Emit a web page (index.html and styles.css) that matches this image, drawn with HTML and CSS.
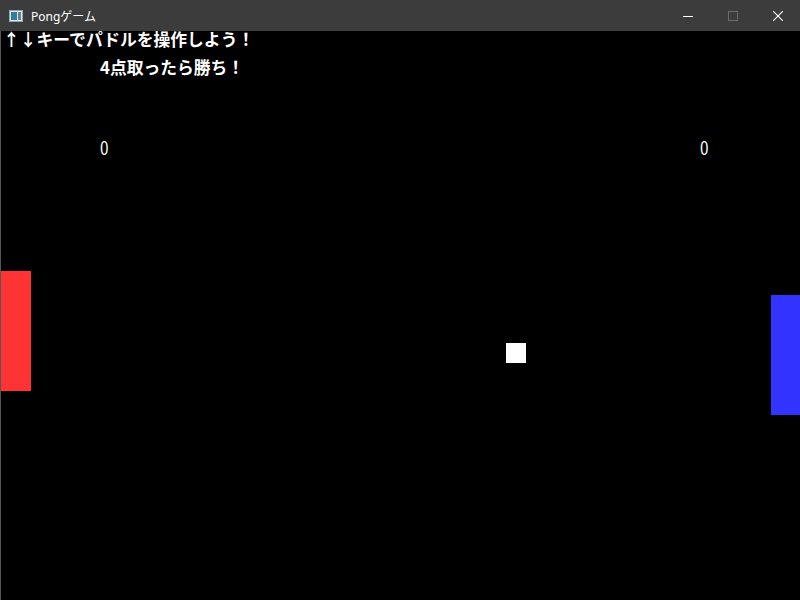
FILE: index.html
```html
<!DOCTYPE html>
<html lang="ja">
<head>
    <meta charset="UTF-8">
    <title>Pongゲーム</title>
    <link rel="stylesheet" href="styles.css">
</head>
<body>
    <!-- Window title bar -->
    <div class="titlebar">
        <div class="title">
            <svg class="app-icon" width="14" height="12" viewBox="0 0 14 12">
                <rect x="0.5" y="0.5" width="13" height="11" fill="#dfe6ea" stroke="#9aa6ad"/>
                <rect x="2" y="2" width="6" height="8" fill="#2f7f9a"/>
                <rect x="9" y="2" width="3" height="8" fill="#6b7f88"/>
            </svg>
            <span>Pongゲーム</span>
        </div>
        <div class="controls">
            <button class="ctrl">
                <svg width="10" height="10" viewBox="0 0 10 10"><line x1="0" y1="5.5" x2="10" y2="5.5" stroke="#fff" stroke-width="1"/></svg>
            </button>
            <button class="ctrl">
                <svg width="10" height="10" viewBox="0 0 10 10"><rect x="0.5" y="0.5" width="9" height="9" fill="none" stroke="#6a6a6a" stroke-width="1"/></svg>
            </button>
            <button class="ctrl">
                <svg width="10" height="10" viewBox="0 0 10 10"><path d="M0 0L10 10M10 0L0 10" stroke="#fff" stroke-width="1.1"/></svg>
            </button>
        </div>
    </div>

    <!-- Game area -->
    <div class="game">
        <div class="help">↑↓キーでパドルを操作しよう！</div>
        <div class="goal">4点取ったら勝ち！</div>
        <div class="score score-left">0</div>
        <div class="score score-right">0</div>
        <div class="paddle paddle-left"></div>
        <div class="paddle paddle-right"></div>
        <div class="ball"></div>
    </div>
</body>
</html>
```

FILE: styles.css
```css
/* General body styling */
body {
    margin: 0;
    width: 800px;
    height: 600px;
    overflow: hidden;
    background-color: #000;
    font-family: "Noto Sans CJK JP", "Noto Sans", sans-serif;
}

/* Title bar */
.titlebar {
    height: 31px;
    background-color: #3c3c3c;
    display: flex;
    justify-content: space-between;
    align-items: center;
}

.title {
    display: flex;
    align-items: center;
    padding-left: 9px;
    gap: 8px;
    color: #fff;
    font-size: 12px;
    font-family: "Noto Sans", "Noto Sans CJK JP", sans-serif;
}

.controls {
    display: flex;
    height: 100%;
}

.ctrl {
    width: 45px;
    height: 100%;
    border: none;
    background: none;
    padding: 0;
    display: flex;
    justify-content: center;
    align-items: center;
}

/* Game canvas */
.game {
    position: relative;
    height: 569px;
    border-left: 1px solid #555;
    box-sizing: border-box;
    color: #fff;
    font-size: 16.8px;
    font-weight: bold;
}

.help {
    position: absolute;
    left: 2px;
    top: -3px;
    line-height: 22px;
}

.goal {
    position: absolute;
    left: 99px;
    top: 25px;
    line-height: 22px;
}

.score {
    position: absolute;
    top: 104px;
    line-height: 24px;
    font-size: 18px;
    font-weight: normal;
    transform: scaleX(0.85);
    transform-origin: left;
}

.score-left {
    left: 99px;
}

.score-right {
    left: 699px;
}

.paddle {
    position: absolute;
    width: 30px;
    height: 120px;
}

.paddle-left {
    left: 0;
    top: 240px;
    background-color: #ff3333;
}

.paddle-right {
    left: 770px;
    top: 264px;
    background-color: #3333ff;
}

.ball {
    position: absolute;
    left: 505px;
    top: 312px;
    width: 20px;
    height: 20px;
    background-color: #fff;
}
```
